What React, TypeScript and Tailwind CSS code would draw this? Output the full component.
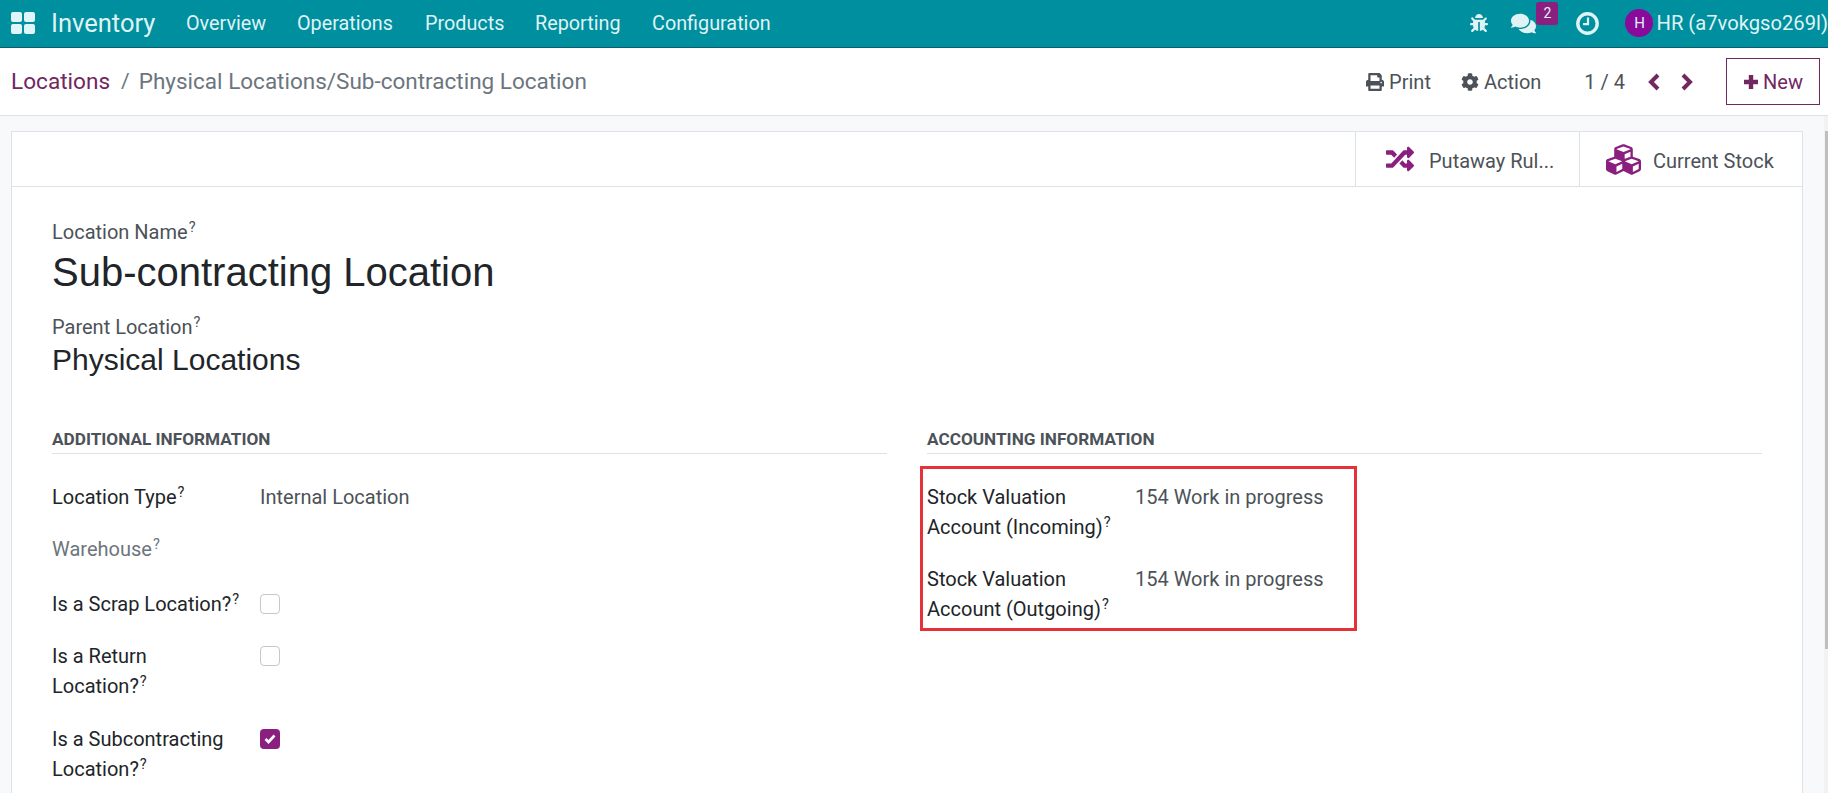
import { FaBug, FaCog, FaComments, FaCubes, FaPrint, FaRandom } from 'react-icons/fa'

const menu = [
  { label: 'Overview', cls: 'w-[111px]' },
  { label: 'Operations', cls: 'w-[128px]' },
  { label: 'Products', cls: 'w-[110px]' },
  { label: 'Reporting', cls: 'w-[117px]' },
  { label: 'Configuration', cls: 'w-[125px]' },
]

function Help() {
  return <sup className="ml-px text-[14.5px] font-normal leading-none">?</sup>
}

function GridIcon() {
  return (
    <svg width="26" height="24" viewBox="0 0 26 24" fill="#e0f5f7">
      <rect x="0" y="0" width="11" height="10" rx="2" />
      <rect x="13" y="0" width="11" height="10" rx="2" />
      <rect x="0" y="12" width="11" height="10" rx="2" />
      <rect x="13" y="12" width="11" height="10" rx="2" />
    </svg>
  )
}

function ClockIcon() {
  return (
    <svg width="23" height="23" viewBox="0 0 23 23" fill="none" stroke="currentColor" className="mr-[26px]">
      <circle cx="11.5" cy="11.5" r="9.7" strokeWidth="3.4" />
      <path d="M12 5.5v6.7H7" strokeWidth="2.2" />
    </svg>
  )
}

function Chevron({ dir }: { dir: 'left' | 'right' }) {
  return (
    <svg width="14" height="18" viewBox="0 0 14 18" fill="none" stroke="#71275f" strokeWidth="4">
      <path d={dir === 'left' ? 'M11 2L4 9l7 7' : 'M3 2l7 7-7 7'} />
    </svg>
  )
}

function Navbar() {
  return (
    <div className="flex h-[48px] items-center border-b border-[#0b5f68] bg-[#008f9e] text-[#dff3f5]">
      <div className="ml-[11px] w-[40px]"><GridIcon /></div>
      <span className="w-[135px] text-[25.5px]">Inventory</span>
      {menu.map((m) => (
        <span key={m.label} className={`${m.cls} text-[19.8px]`}>{m.label}</span>
      ))}
      <div className="ml-auto flex items-center">
        <FaBug className="mr-[23px] text-[18px]" />
        <div className="relative mr-[40px]">
          <FaComments className="text-[25px]" />
          <span className="absolute -right-[22px] -top-[9px] flex h-[23px] w-[22px] items-center justify-center rounded-[3px] bg-[#8b1f7f] text-[14px] leading-none">2</span>
        </div>
        <ClockIcon />
        <span className="mr-[3px] flex h-[28px] w-[28px] items-center justify-center rounded-full bg-[#8a0a9c] text-[15px]">H</span>
        <span className="text-[20.2px]">HR (a7vokgso269l)</span>
      </div>
    </div>
  )
}

function ControlPanel() {
  return (
    <div className="flex h-[68px] items-center border-b border-[#dee2e6] bg-white pl-[11px] pr-[8px]">
      <span className="text-[22.6px] text-[#71275f]">Locations</span>
      <span className="ml-[11px] mr-[9px] text-[21px] text-[#6c757d]">/</span>
      <span className="text-[22.5px] text-[#6c757d]">Physical Locations/Sub-contracting Location</span>
      <div className="ml-auto flex items-center text-[20px] text-[#4c5258]">
        <FaPrint className="mr-[5px] text-[18px]" />
        <span className="mr-[30px]">Print</span>
        <FaCog className="mr-[5px] text-[18px]" />
        <span className="mr-[43px]">Action</span>
        <span className="mr-[22px]">1 / 4</span>
        <span className="mr-[19px]"><Chevron dir="left" /></span>
        <span className="mr-[32px]"><Chevron dir="right" /></span>
        <button className="flex h-[47px] w-[94px] items-center justify-center gap-[4px] border border-[#71275f] text-[20px] text-[#71275f]">
          <svg width="16" height="16" viewBox="0 0 16 16" stroke="currentColor" strokeWidth="4.4">
            <path d="M8 1v14M1 8h14" />
          </svg>
          New
        </button>
      </div>
    </div>
  )
}

function Row({ label, value, muted }: { label: string; value?: string; muted?: boolean }) {
  return (
    <div className="flex">
      <div className={`w-[208px] pr-[16px] ${muted ? 'text-[#6c757d]' : 'text-[#212529]'}`}>
        {label}
        <Help />
      </div>
      {value && <div className="text-[#4c5258]">{value}</div>}
    </div>
  )
}

function CheckRow({ label, checked }: { label: string; checked?: boolean }) {
  return (
    <div className="flex">
      <div className="w-[208px] pr-[16px] text-[#212529]">
        {label}
        <Help />
      </div>
      <div className="pt-[5px]">
        {checked ? (
          <span className="flex h-[20px] w-[20px] items-center justify-center rounded-[4px] bg-[#8b1f7f] text-white">
            <svg width="12" height="10" viewBox="0 0 12 10" fill="none" stroke="currentColor" strokeWidth="2.6">
              <path d="M1.5 5l3 3 6-6.5" />
            </svg>
          </span>
        ) : (
          <span className="block h-[20px] w-[20px] rounded-[4px] border border-[#c4c8cc] bg-white" />
        )}
      </div>
    </div>
  )
}

function SectionTitle({ children }: { children: string }) {
  return (
    <div className="border-b border-[#dee2e6] pb-[2px] text-[17.2px] leading-[24px] font-bold text-[#4c5258]">{children}</div>
  )
}

function Sheet() {
  return (
    <div className="ml-[11px] mt-[15px] w-[1792px] border border-[#dee2e6] bg-white">
      <div className="flex h-[55px] justify-end border-b border-[#dee2e6] text-[20px] text-[#4c5258]">
        <div className="flex w-[224px] items-center border-l border-[#dee2e6] pl-[30px]">
          <FaRandom className="mr-[15px] text-[28px] text-[#8b1f7f]" />
          <span className="pt-[3px]">Putaway Rul...</span>
        </div>
        <div className="flex w-[223px] items-center border-l border-[#dee2e6] pl-[26px]">
          <FaCubes className="mr-[12px] text-[35px] text-[#8b1f7f]" />
          <span className="pt-[3px]">Current Stock</span>
        </div>
      </div>
      <div className="px-[40px] pb-[40px] pt-[30px] text-[20px] leading-[30px]">
        <div className="text-[#4c5258]">Location Name<Help /></div>
        <h1 className="font-['Liberation_Sans',Arial,sans-serif] text-[40px] leading-[50px] text-[#212529]">Sub-contracting Location</h1>
        <div className="mt-[15px] text-[#4c5258]">Parent Location<Help /></div>
        <h2 className="font-['Liberation_Sans',Arial,sans-serif] text-[30px] leading-[36px] text-[#212529]">Physical Locations</h2>
        <div className="mt-[49px] flex gap-[40px]">
          <div className="w-[836px]">
            <SectionTitle>ADDITIONAL INFORMATION</SectionTitle>
            <div className="mt-[28px] flex flex-col gap-[22px]">
              <Row label="Location Type" value="Internal Location" />
              <div className="mb-[3px]"><Row label="Warehouse" muted /></div>
              <CheckRow label="Is a Scrap Location?" />
              <div className="mb-[1px]"><CheckRow label="Is a Return Location?" /></div>
              <CheckRow label="Is a Subcontracting Location?" checked />
            </div>
          </div>
          <div className="w-[836px]">
            <SectionTitle>ACCOUNTING INFORMATION</SectionTitle>
            <div className="relative mt-[28px] flex flex-col gap-[22px]">
              <Row label="Stock Valuation Account (Incoming)" value="154 Work in progress" />
              <Row label="Stock Valuation Account (Outgoing)" value="154 Work in progress" />
              <div className="absolute -left-[7px] -top-[16px] h-[165px] w-[437px] border-[3px] border-[#e5323a]" />
            </div>
          </div>
        </div>
      </div>
    </div>
  )
}

export default function App() {
  return (
    <div className="h-[793px] w-[1828px] overflow-hidden bg-[#f8f9fa] font-['Roboto',sans-serif]">
      <Navbar />
      <ControlPanel />
      <div className="flex">
        <div className="flex-1"><Sheet /></div>
        <div className="flex h-[677px] w-[4px] justify-end bg-[#f1f2f3] pt-[15px]">
          <div className="h-[518px] w-[3px] bg-[#bdbfc1]" />
        </div>
      </div>
    </div>
  )
}
